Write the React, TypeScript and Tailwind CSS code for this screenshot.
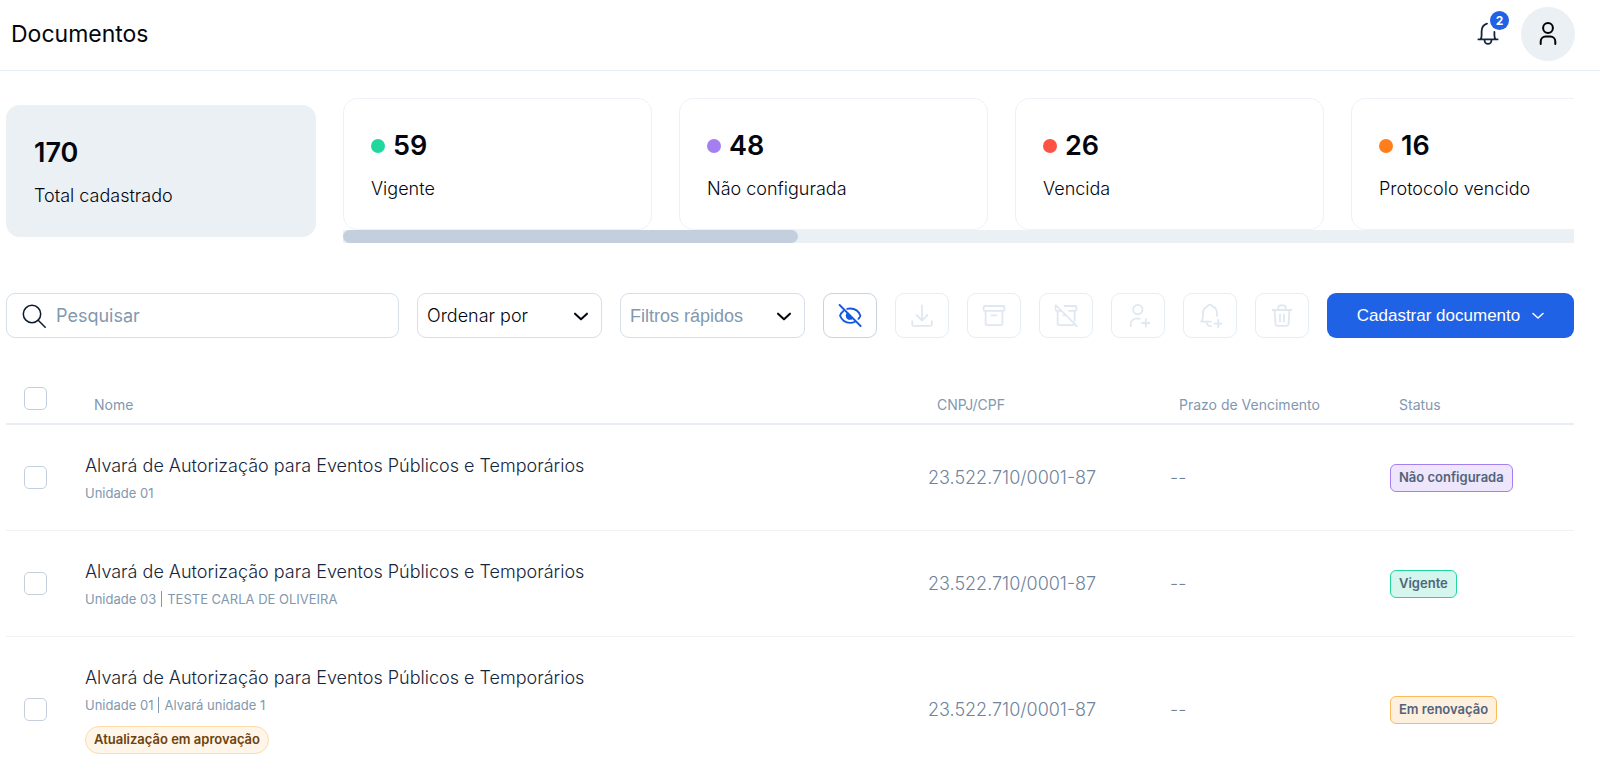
import React, { useState } from 'react';

type IconProps = { className?: string; children: React.ReactNode; strokeWidth?: number };

const Icon: React.FC<IconProps> = ({ className = 'size-6', strokeWidth = 1.5, children }) => (
  <svg
    className={className}
    viewBox="0 0 24 24"
    fill="none"
    stroke="currentColor"
    strokeWidth={strokeWidth}
    strokeLinecap="round"
    strokeLinejoin="round"
    aria-hidden="true"
  >
    {children}
  </svg>
);

const summary = [
  { total: 59, label: 'Vigente', dot: 'bg-[#22d79d]' },
  { total: 48, label: 'Não configurada', dot: 'bg-[#a57ff0]' },
  { total: 26, label: 'Vencida', dot: 'bg-[#fc5344]' },
  { total: 16, label: 'Protocolo vencido', dot: 'bg-[#ff7d1a]' },
];

const actions = [
  {
    label: 'Baixar',
    icon: <path d="M12 1.5v15M6.500 11l5.500 5.500 5.500-5.500M2.200 17.200v3a1.600 1.600 0 0 0 1.600 1.600h16.400a1.600 1.600 0 0 0 1.600-1.600v-3" />,
  },
  {
    label: 'Arquivar',
    icon: (
      <>
        <rect x="1.600" y="2" width="20.800" height="4.800" rx="1.400" />
        <path d="M3.600 7v12.400a1.800 1.800 0 0 0 1.800 1.800h13.200a1.800 1.800 0 0 0 1.800-1.800V7M9.500 11.400h5" />
      </>
    ),
  },
  {
    label: 'Desarquivar',
    icon: (
      <>
        <path d="M10.500 2H21a1.400 1.400 0 0 1 1.400 1.400v2A1.400 1.400 0 0 1 21 6.800h-6M1.600 2.400v3A1.400 1.400 0 0 0 3 6.800h4" />
        <path d="M3.600 7v12.400a1.800 1.800 0 0 0 1.800 1.800h13.200a1.800 1.800 0 0 0 1.800-1.800M20.600 7v9.500M9.500 11.400h1.500" />
        <path d="m1.800 1.200 21 21" />
      </>
    ),
  },
  {
    label: 'Adicionar responsável',
    icon: (
      <>
        <circle cx="11.800" cy="5.600" r="4.700" />
        <path d="M4.800 22.200v-2.400a5.200 5.200 0 0 1 5.200-5.200h4M19.800 15.200v7.600M16 19h7.600" />
      </>
    ),
  },
  {
    label: 'Adicionar lembrete',
    icon: (
      <>
        <path d="M19 12V9.200c0-3.400-1.800-5.600-4.600-6.800a2.500 2.500 0 0 0-4.800 0C6.800 3.600 5 5.800 5 9.200v3.400c0 2-.6 3-1.800 5H13" />
        <path d="M8.600 18c.2 2.600 1.800 4.200 4.400 4.200M20.200 15.800v7.600M16.400 19.600H24" />
      </>
    ),
  },
  {
    label: 'Excluir',
    icon: (
      <path d="M2.600 6h18.800M4.500 6l1 14a2 2 0 0 0 2 1.800h9a2 2 0 0 0 2-1.800l1-14M8.400 6V3.200a1.800 1.800 0 0 1 1.800-1.800h3.600a1.800 1.800 0 0 1 1.800 1.800V6M10 10.400v7M14 10.400v7" />
    ),
  },
];

type Documento = {
  id: number;
  name: string;
  units: string[];
  cnpj: string;
  due: string;
  status: string;
  statusStyle: string;
  note?: string;
};

const documents: Documento[] = [
  {
    id: 1,
    name: 'Alvará de Autorização para Eventos Públicos e Temporários',
    units: ['Unidade 01'],
    cnpj: '23.522.710/0001-87',
    due: '--',
    status: 'Não configurada',
    statusStyle: 'border-[#a57ff0] bg-[#eee6fc]',
  },
  {
    id: 2,
    name: 'Alvará de Autorização para Eventos Públicos e Temporários',
    units: ['Unidade 03', 'TESTE CARLA DE OLIVEIRA'],
    cnpj: '23.522.710/0001-87',
    due: '--',
    status: 'Vigente',
    statusStyle: 'border-[#22d79d] bg-[#d5f6ec]',
  },
  {
    id: 3,
    name: 'Alvará de Autorização para Eventos Públicos e Temporários',
    units: ['Unidade 01', 'Alvará unidade 1'],
    cnpj: '23.522.710/0001-87',
    due: '--',
    status: 'Em renovação',
    statusStyle: 'border-[#fdb95a] bg-[#fef0de]',
    note: 'Atualização em aprovação',
  },
];

const checkboxStyle =
  'block size-[23px] appearance-none rounded-[5px] border border-[#c3cfdd] bg-white checked:border-[#2062e6] checked:bg-[#2062e6]';

const Header = () => (
  <header className="flex h-[71px] items-center justify-between border-b border-[#e6edf3] pr-[25px] pb-[2px] pl-[11px]">
    <h1 className="text-[23px] leading-7 text-[#04060f]">Documentos</h1>
    <div className="flex items-center gap-[21px]">
      <button type="button" aria-label="Notificações" className="relative text-[#16253b]">
        <Icon strokeWidth={1.8}>
          <path d="M2.400 17.400h19.200M4.600 17.200c.7-1 1-2 1-3.600V9.400c0-3.900 2.200-6.800 5.400-7.800M19.600 17.200c-.8-1-1.200-2-1.200-3.600V10M8.600 18.400a3.400 3.400 0 0 0 6.800 0" />
        </Icon>
        <span className="absolute -top-[11px] -right-[9px] flex size-[19px] items-center justify-center rounded-full bg-[#2062e6] text-xs leading-none font-bold text-white">
          2
        </span>
      </button>
      <button
        type="button"
        aria-label="Perfil"
        className="flex size-[54px] items-center justify-center rounded-full bg-[#ebf0f4] text-black"
      >
        <Icon strokeWidth={2}>
          <circle cx="12" cy="6" r="4.900" />
          <path d="M4.700 22v-2.600a5 5 0 0 1 5-5h4.600a5 5 0 0 1 5 5V22" />
        </Icon>
      </button>
    </div>
  </header>
);

const Summary = () => (
  <section className="flex gap-[27px]">
    <div className="mt-[7px] h-[132px] w-[310px] shrink-0 rounded-[14px] bg-[#ebf0f4] px-7 pt-[30px]">
      <p className="text-[27px] leading-9 font-semibold">170</p>
      <p className="mt-[11px] text-lg leading-7 font-light">Total cadastrado</p>
    </div>
    <div className="min-w-0 flex-1">
      <div className="flex gap-[27px] overflow-hidden">
        {summary.map(item => (
          <div
            key={item.label}
            className="h-[132px] w-[309px] shrink-0 rounded-[14px] border border-[#eef2f7] px-[27px] pt-[29px]"
          >
            <div className="flex items-center gap-2">
              <span className={`size-[14px] rounded-full ${item.dot}`} />
              <p className="text-[27px] leading-9 font-semibold">{item.total}</p>
            </div>
            <p className="mt-[11px] text-lg leading-7 font-light">{item.label}</p>
          </div>
        ))}
      </div>
      <div className="h-[13px] bg-[#ebf0f4]">
        <div className="h-full w-[37%] rounded-full bg-[#c3cfdd]" />
      </div>
    </div>
  </section>
);

type SelectFieldProps = { label: string; className: string };

const SelectField: React.FC<SelectFieldProps> = ({ label, className }) => (
  <div className="relative">
    <select
      aria-label={label}
      className={`h-[45px] w-[185px] appearance-none rounded-[9px] border border-[#d5dfe9] bg-white pr-10 pl-[9px] text-lg ${className}`}
    >
      <option>{label}</option>
    </select>
    <Icon className="pointer-events-none absolute top-4 right-[13px] size-4 text-[#04060f]" strokeWidth={3}>
      <path d="m3 7 9 8.500L21 7" />
    </Icon>
  </div>
);

const Toolbar = () => (
  <div className="mt-[50px] flex gap-[18px]">
    <label className="flex h-[45px] min-w-0 flex-1 items-center gap-[10px] rounded-[9px] border border-[#d5dfe9] pl-[15px]">
      <Icon className="size-6 shrink-0 text-[#0c1a2e]">
        <circle cx="10" cy="10" r="8.700" />
        <path d="m16.200 16.200 7 7" />
      </Icon>
      <input
        type="search"
        aria-label="Pesquisar"
        placeholder="Pesquisar"
        className="min-w-0 flex-1 bg-transparent text-lg outline-none placeholder:text-[#8298af]"
      />
    </label>
    <SelectField label="Ordenar por" className="font-light text-[#04060f]" />
    <SelectField label="Filtros rápidos" className="font-['Liberation_Sans',sans-serif] text-[#8298af]" />
    <button
      type="button"
      aria-label="Ocultar"
      className="flex h-[45px] w-[54px] items-center justify-center rounded-[9px] border border-[#c9d4e0] text-[#1558e0]"
    >
      <Icon strokeWidth={1.8}>
        <path d="M9.200 4.900a11 11 0 0 1 3-.4c5 0 8.800 3.300 10.200 7.200a9 9 0 0 1-2 3.200M5.400 7A10 10 0 0 0 2 11.700c1.600 4 5.400 7.200 10.200 7.200a11 11 0 0 0 4.800-1.100" />
        <path d="M9.600 9.400a3.200 3.200 0 0 0 4.600 4.600" fill="currentColor" />
        <path d="m1.600 1 21 21" />
      </Icon>
    </button>
    {actions.map(action => (
      <button
        key={action.label}
        type="button"
        disabled
        aria-label={action.label}
        className="flex h-[45px] w-[54px] items-center justify-center rounded-[9px] border border-[#e6edf5] text-[#dfe8f1]"
      >
        <Icon strokeWidth={1.8}>{action.icon}</Icon>
      </button>
    ))}
    <button
      type="button"
      className="flex h-[45px] w-[247px] items-center justify-center gap-3 rounded-[9px] bg-[#2062e6] font-['Liberation_Sans',sans-serif] text-[17px] text-white"
    >
      Cadastrar documento
      <Icon className="size-3" strokeWidth={3}>
        <path d="m2 7 10 9L22 7" />
      </Icon>
    </button>
  </div>
);

const DocumentsTable = () => {
  const [selected, setSelected] = useState<number[]>([]);
  const allSelected = selected.length === documents.length;

  const toggle = (id: number) => {
    setSelected(selected.includes(id) ? selected.filter(s => s !== id) : [...selected, id]);
  };

  return (
    <table className="mt-12 w-full table-fixed border-collapse text-left">
      <thead>
        <tr className="border-b-2 border-[#e8eef4] text-sm leading-5 text-[#8298af]">
          <th className="w-[79px] pt-px pb-[13px] pl-[18px]">
            <input
              type="checkbox"
              aria-label="Selecionar todos"
              className={checkboxStyle}
              checked={allSelected}
              onChange={() => setSelected(allSelected ? [] : documents.map(d => d.id))}
            />
          </th>
          <th className="pb-2 pl-[9px] align-bottom font-normal">Nome</th>
          <th className="w-[242px] pb-2 pl-[9px] align-bottom font-normal">CNPJ/CPF</th>
          <th className="w-[220px] pb-2 pl-[9px] align-bottom font-normal">Prazo de Vencimento</th>
          <th className="w-[184px] pb-2 pl-[9px] align-bottom font-normal">Status</th>
        </tr>
      </thead>
      <tbody>
        {documents.map(doc => (
          <tr key={doc.id} className="border-b border-[#f0f3f6]">
            <td className="pl-[18px]">
              <input
                type="checkbox"
                aria-label={`Selecionar ${doc.name}`}
                className={checkboxStyle}
                checked={selected.includes(doc.id)}
                onChange={() => toggle(doc.id)}
              />
            </td>
            <td className="pt-[27px] pb-6">
              <p className="text-lg leading-7 font-light text-[#16253b]">{doc.name}</p>
              <p className="flex items-center text-[13px] leading-[26px] text-[#8298af]">
                {doc.units.map((unit, i) => (
                  <span key={unit} className="flex items-center">
                    {i > 0 && <span className="mx-[5px] h-4 w-px bg-[#8298af]" />}
                    {unit}
                  </span>
                ))}
              </p>
              {doc.note && (
                <span className="mt-2 mb-1 flex h-7 w-fit items-center rounded-full border border-[#fddcaa] bg-[#fff5e8] px-2 text-[13px] font-semibold text-[#6b4310]">
                  {doc.note}
                </span>
              )}
            </td>
            <td className="text-lg font-light text-[#70849b]">{doc.cnpj}</td>
            <td className="text-lg font-light text-[#70849b]">{doc.due}</td>
            <td>
              <span
                className={`flex h-7 w-fit items-center rounded-md border px-2 text-[13px] font-semibold text-[#52647b] ${doc.statusStyle}`}
              >
                {doc.status}
              </span>
            </td>
          </tr>
        ))}
      </tbody>
    </table>
  );
};

const App = () => (
  <div className="min-h-screen bg-white font-['Inter',sans-serif] text-[#04060f]">
    <Header />
    <main className="pt-[27px] pr-[26px] pl-[6px]">
      <Summary />
      <Toolbar />
      <DocumentsTable />
    </main>
  </div>
);

export default App;
